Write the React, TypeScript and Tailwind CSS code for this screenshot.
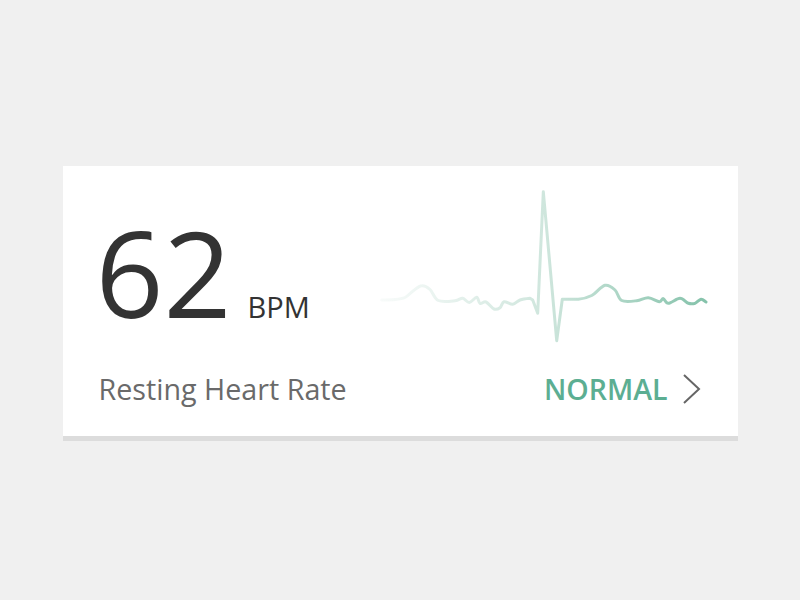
import React from "react";

type P = [number, number];
const pts: P[] = [
  [381.7, 300], [395, 299.6], [405, 297.5], [413, 291], [421.7, 285.7], [430, 289.5], [438.3, 300.5],
  [455, 300.7], [462.7, 298.3], [469.3, 302.5], [476.7, 297.3], [480, 303.5], [486, 302],
  [494, 309], [500, 307.7], [504, 301.7], [512.7, 304.3], [520, 300], [530, 298.3],
  [532.7, 300], [537.7, 313.3], [543.3, 191.7], [556.7, 340.7], [562.3, 299.3],
  [578.3, 299.3], [591.7, 295.5], [605, 285.3], [615, 290], [621.7, 300.5], [636.7, 300.7],
  [648.3, 297.7], [659.3, 301.7], [663.3, 298.6], [668.3, 303.3], [680, 298.3], [688.3, 303.3],
  [695, 303.3], [701, 299.3], [706, 302],
];

function buildPath(p: P[]): string {
  let d = `M${p[0][0]},${p[0][1]}`;
  for (let i = 0; i < p.length - 1; i++) {
    const p0 = p[i - 1] || p[i];
    const p1 = p[i];
    const p2 = p[i + 1];
    const p3 = p[i + 2] || p2;
    const sharp = p1[0] >= 530 && p1[0] < 578;
    if (sharp) {
      d += ` L${p2[0]},${p2[1]}`;
    } else {
      const t = 6;
      const c1x = p1[0] + (p2[0] - p0[0]) / t;
      const c1y = p1[1] + (p2[1] - p0[1]) / t;
      const c2x = p2[0] - (p3[0] - p1[0]) / t;
      const c2y = p2[1] - (p3[1] - p1[1]) / t;
      const nextSharp = p2[0] >= 530 && p2[0] < 578;
      d += ` C${c1x.toFixed(1)},${c1y.toFixed(1)} ${nextSharp ? p2[0] : c2x.toFixed(1)},${nextSharp ? p2[1] : c2y.toFixed(1)} ${p2[0]},${p2[1]}`;
    }
  }
  return d;
}

const ecg = buildPath(pts);

export default function App() {
  return (
    <div
      className="min-h-screen w-full bg-[#f0f0f0] flex justify-center pt-[166px]"
      style={{ fontFamily: '"Open Sans", "Noto Sans", sans-serif' }}
    >
      <div className="w-[675px] h-[275px] bg-white border-b-[5px] border-[#dcdcdc] flex flex-col px-[36px] pt-[20px]">
        <div className="flex justify-between items-start h-[160px]">
          <div className="flex items-baseline mt-[27px] -ml-[3px]">
            <span className="text-[119px] leading-none font-normal text-[#333333]">62</span>
            <span className="text-[29px] leading-none text-[#333333] ml-[16px]">BPM</span>
          </div>
          <svg width="334" height="160" viewBox="378 186 334 160" className="-mr-[10px]">
            <defs>
              <linearGradient id="g" gradientUnits="userSpaceOnUse" x1="380" y1="0" x2="708" y2="0">
                <stop offset="0" stopColor="#f8fbfa" />
                <stop offset="0.5" stopColor="#cfe6dd" />
                <stop offset="1" stopColor="#84c2aa" />
              </linearGradient>
            </defs>
            <path d={ecg} fill="none" stroke="url(#g)" strokeWidth="3" strokeLinejoin="round" strokeLinecap="round" />
          </svg>
        </div>
        <div className="flex justify-between items-center mt-[27px]">
          <span className="text-[28.7px] leading-none text-[#6a6a6a]">Resting Heart Rate</span>
          <div className="flex items-center">
            <span className="text-[28.5px] leading-none font-semibold text-[#5cae92]">NORMAL</span>
            <svg width="20" height="32" viewBox="0 0 20 32" className="ml-[14px]">
              <polyline points="2,2 17,16 2,30" fill="none" stroke="#666666" strokeWidth="2" />
            </svg>
          </div>
        </div>
      </div>
    </div>
  );
}
